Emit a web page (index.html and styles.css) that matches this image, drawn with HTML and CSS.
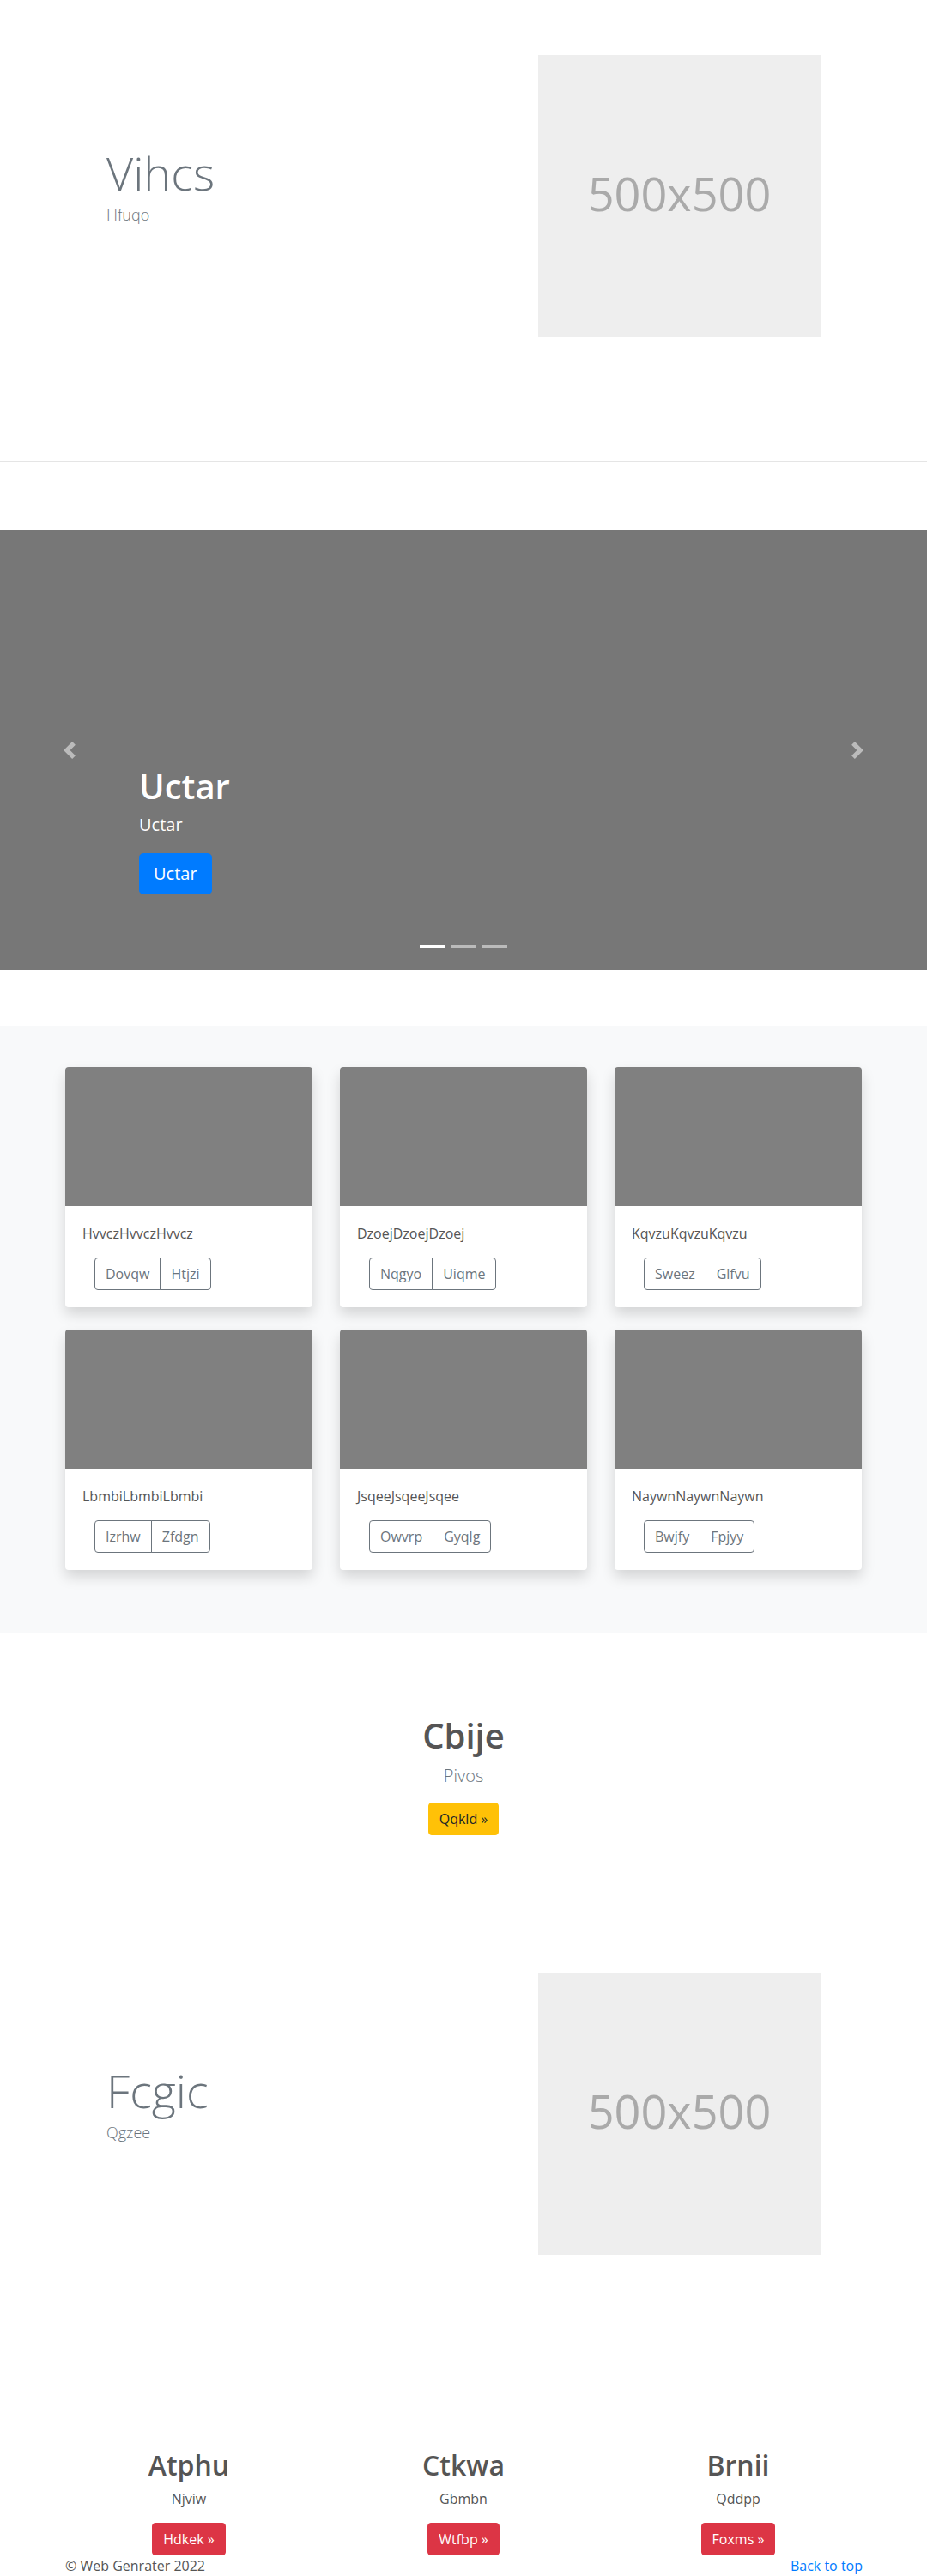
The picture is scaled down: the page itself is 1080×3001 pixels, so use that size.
FILE: index.html
```html
<!DOCTYPE html>
<html lang="en">
<head>
<meta charset="utf-8">
<title>Web Genrater</title>
<link rel="stylesheet" href="styles.css">
</head>
<body>
<main>
  <section class="feature">
    <div class="feature-row">
      <div class="feature-text">
        <h1 class="feature-title">Vihcs</h1>
        <p class="feature-sub">Hfuqo</p>
      </div>
      <div class="placeholder"><span>500x500</span></div>
    </div>
  </section>
  <hr class="divider">

  <div class="carousel">
    <div class="carousel-caption">
      <h1 class="caption-title">Uctar</h1>
      <p class="caption-text">Uctar</p>
      <a class="btn btn-lg btn-primary" href="#">Uctar</a>
    </div>
    <a class="carousel-control control-prev" href="#">
      <svg width="20" height="20" viewBox="0 0 8 8"><path fill="#fff" d="M5.25 0l-4 4 4 4 1.5-1.5L4.25 4l2.5-2.5L5.25 0z"/></svg>
    </a>
    <a class="carousel-control control-next" href="#">
      <svg width="20" height="20" viewBox="0 0 8 8"><path fill="#fff" d="M2.75 0l-1.5 1.5L3.75 4l-2.5 2.5L2.75 8l4-4-4-4z"/></svg>
    </a>
    <div class="indicators">
      <span class="active"></span><span></span><span></span>
    </div>
  </div>

  <section class="cards-section">
    <div class="card-grid">
      <div class="card"><div class="card-img"></div><div class="card-body"><p class="card-text">HvvczHvvczHvvcz</p><div class="btn-group"><a class="btn btn-outline" href="#">Dovqw</a><a class="btn btn-outline" href="#">Htjzi</a></div></div></div>
      <div class="card"><div class="card-img"></div><div class="card-body"><p class="card-text">DzoejDzoejDzoej</p><div class="btn-group"><a class="btn btn-outline" href="#">Nqgyo</a><a class="btn btn-outline" href="#">Uiqme</a></div></div></div>
      <div class="card"><div class="card-img"></div><div class="card-body"><p class="card-text">KqvzuKqvzuKqvzu</p><div class="btn-group"><a class="btn btn-outline" href="#">Sweez</a><a class="btn btn-outline" href="#">Glfvu</a></div></div></div>
      <div class="card"><div class="card-img"></div><div class="card-body"><p class="card-text">LbmbiLbmbiLbmbi</p><div class="btn-group"><a class="btn btn-outline" href="#">Izrhw</a><a class="btn btn-outline" href="#">Zfdgn</a></div></div></div>
      <div class="card"><div class="card-img"></div><div class="card-body"><p class="card-text">JsqeeJsqeeJsqee</p><div class="btn-group"><a class="btn btn-outline" href="#">Owvrp</a><a class="btn btn-outline" href="#">Gyqlg</a></div></div></div>
      <div class="card"><div class="card-img"></div><div class="card-body"><p class="card-text">NaywnNaywnNaywn</p><div class="btn-group"><a class="btn btn-outline" href="#">Bwjfy</a><a class="btn btn-outline" href="#">Fpjyy</a></div></div></div>
    </div>
  </section>

  <section class="cta">
    <h1 class="cta-title">Cbije</h1>
    <p class="cta-sub">Pivos</p>
    <a class="btn btn-warning" href="#">Qqkld &raquo;</a>
  </section>

  <section class="feature">
    <div class="feature-row">
      <div class="feature-text">
        <h1 class="feature-title">Fcgic</h1>
        <p class="feature-sub">Qgzee</p>
      </div>
      <div class="placeholder"><span>500x500</span></div>
    </div>
  </section>
  <hr class="divider">

  <section class="columns">
    <div class="col">
      <h2 class="col-title">Atphu</h2>
      <p class="col-text">Njviw</p>
      <a class="btn btn-danger" href="#">Hdkek &raquo;</a>
    </div>
    <div class="col">
      <h2 class="col-title">Ctkwa</h2>
      <p class="col-text">Gbmbn</p>
      <a class="btn btn-danger" href="#">Wtfbp &raquo;</a>
    </div>
    <div class="col">
      <h2 class="col-title">Brnii</h2>
      <p class="col-text">Qddpp</p>
      <a class="btn btn-danger" href="#">Foxms &raquo;</a>
    </div>
  </section>

  <footer class="footer">
    <p>&copy; Web Genrater 2022</p>
    <p><a class="top-link" href="#">Back to top</a></p>
  </footer>
</main>
</body>
</html>
```

FILE: styles.css
```css
* { box-sizing: border-box; }

body {
  margin: 0;
  font-family: "Open Sans", "Noto Sans", sans-serif;
  font-size: 16px;
  line-height: 1.5;
  color: #212529;
  background: #fff;
}

h1, h2, p { margin: 0; }
a { text-decoration: none; }

/* feature rows */
.feature { padding: 64px 0 144px; }
.feature-row { display: flex; align-items: center; }
.feature-text { width: 627px; padding-left: 124px; padding-bottom: 20px; }
.feature-title {
  font-size: 54px;
  line-height: 1;
  font-weight: 300;
  color: #6c757d;
  margin-bottom: 9px;
}
.feature-sub {
  font-size: 18px;
  line-height: 27px;
  font-weight: 300;
  color: #6c757d;
}
.placeholder {
  width: 329px;
  height: 329px;
  background: #eee;
  color: #aaa;
  display: flex;
  align-items: center;
  justify-content: center;
  font-size: 54px;
  line-height: 1;
  padding-bottom: 7px;
}

.divider {
  margin: 0;
  height: 0;
  border: 0;
  border-top: 1px solid #e5e5e5;
}

/* buttons */
.btn {
  display: inline-block;
  padding: 6px 12px;
  font-size: 16px;
  line-height: 24px;
  border: 1px solid transparent;
  border-radius: 4px;
}
.btn-lg {
  padding: 8px 16px;
  font-size: 20px;
  line-height: 30px;
  border-radius: 4.8px;
}
.btn-primary { background: #007bff; border-color: #007bff; color: #fff; }
.btn-warning { background: #ffc107; border-color: #ffc107; color: #212529; }
.btn-danger { background: #dc3545; border-color: #dc3545; color: #fff; }

/* carousel */
.carousel {
  position: relative;
  height: 512px;
  margin-top: 80px;
  background: #777;
}
.carousel-caption {
  position: absolute;
  left: 162px;
  top: 274px;
  color: #fff;
}
.caption-title {
  font-size: 40px;
  line-height: 48px;
  font-weight: 600;
  margin-bottom: 6px;
}
.caption-text {
  font-size: 20px;
  line-height: 30px;
  margin-bottom: 18px;
}
.carousel-control {
  position: absolute;
  top: 0;
  bottom: 0;
  width: 15%;
  display: flex;
  align-items: center;
  justify-content: center;
  opacity: .5;
}
.control-prev { left: 0; }
.control-next { right: 0; }
.carousel-control svg { display: block; }
.indicators {
  position: absolute;
  left: 0;
  right: 0;
  bottom: 16px;
  display: flex;
  justify-content: center;
  gap: 6px;
}
.indicators span {
  width: 30px;
  height: 3px;
  margin: 10px 0;
  background: rgba(255, 255, 255, .5);
}
.indicators span.active { background: #fff; }

/* cards */
.cards-section {
  margin-top: 65px;
  padding: 48px 0 73px;
  background: #f8f9fa;
}
.card-grid {
  display: grid;
  grid-template-columns: repeat(3, 288px);
  column-gap: 32px;
  row-gap: 26px;
  margin-left: 76px;
}
.card {
  background: #fff;
  border-radius: 4px;
  overflow: hidden;
  box-shadow: 0 8px 16px rgba(0, 0, 0, .15);
}
.card-img { height: 162px; background: #808080; }
.card-body { padding: 20px; }
.card-text {
  font-size: 16px;
  line-height: 24px;
  color: #555;
  margin-bottom: 16px;
}
.btn-group { display: inline-flex; margin-left: 14px; }
.btn-outline {
  color: #6c757d;
  border-color: #6c757d;
  background: transparent;
}
.btn-group .btn-outline:first-child { border-radius: 4px 0 0 4px; }
.btn-group .btn-outline:last-child { border-radius: 0 4px 4px 0; margin-left: -1px; }

/* call to action */
.cta { text-align: center; padding: 96px 0; }
.cta-title {
  font-size: 40px;
  line-height: 48px;
  font-weight: 600;
  color: #555;
  margin-bottom: 8px;
}
.cta-sub {
  font-size: 20px;
  line-height: 30px;
  font-weight: 300;
  color: #6c757d;
  margin-bottom: 16px;
}

/* columns */
.columns {
  display: grid;
  grid-template-columns: repeat(3, 320px);
  margin: 81px 0 0 60px;
  text-align: center;
}
.col-title {
  font-size: 32px;
  line-height: 38.4px;
  font-weight: 600;
  color: #555;
  margin-bottom: 8px;
}
.col-text { color: #555; margin-bottom: 16px; }

/* footer */
.footer {
  display: flex;
  justify-content: space-between;
  margin: 0 75px 0 76px;
  color: #555;
}
.top-link { color: #007bff; }
```
